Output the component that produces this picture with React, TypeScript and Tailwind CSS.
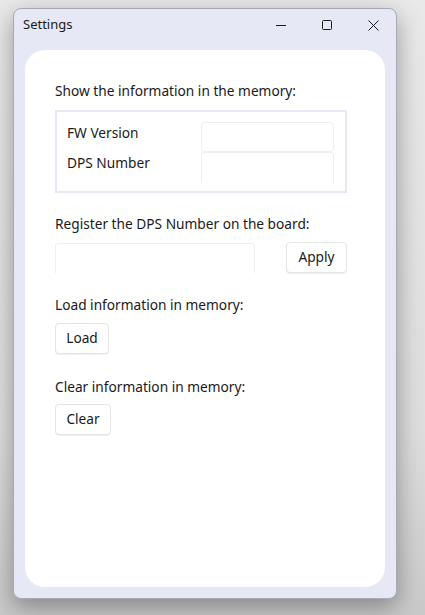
import React from "react";

export default function App() {
  return (
    <div
      className="w-[425px] h-[615px] overflow-hidden relative bg-[linear-gradient(180deg,#e9e9e9_0%,#dedede_70%,#c9c9c9_100%)] pt-[8px] pl-[13px]"
      style={{ fontFamily: '"Noto Sans", "Open Sans", sans-serif' }}
    >
      <div className="w-[384px] h-[591px] rounded-[8px] border border-[#a9a9b4] bg-[#e6e8f5] shadow-[0_8px_24px_rgba(0,0,0,0.35)] flex flex-col">
        <div className="h-[32px] flex items-center pl-[9px] text-[13px] text-[#1a1a1a]">
          <span className="flex-1">Settings</span>
          <div className="flex items-center h-full">
            <div className="w-[46px] h-full flex items-center justify-center">
              <svg width="10" height="10" viewBox="0 0 10 10"><path d="M0 5.5H10" stroke="#1a1a1a" strokeWidth="1" /></svg>
            </div>
            <div className="w-[46px] h-full flex items-center justify-center">
              <svg width="10" height="10" viewBox="0 0 10 10"><rect x="0.5" y="0.5" width="9" height="9" rx="1" fill="none" stroke="#1a1a1a" strokeWidth="1" /></svg>
            </div>
            <div className="w-[46px] h-full flex items-center justify-center">
              <svg width="11" height="11" viewBox="0 0 11 11"><path d="M0.5 0.5L10.5 10.5M10.5 0.5L0.5 10.5" stroke="#1a1a1a" strokeWidth="1" /></svg>
            </div>
          </div>
        </div>
        <div className="flex-1 px-[11px] pt-[9px] pb-[11px]">
          <div className="h-full bg-white rounded-[20px] pl-[30px] pr-[38px] pt-[30px] text-[13.7px] text-[#1a1a1a]">
            <div className="h-[22px] leading-[22px]">Show the information in the memory:</div>
            <div className="mt-[8px] h-[83px] border-2 border-[#e6e8f5] pl-[10px] pr-[11px] pt-[10px] flex">
              <div className="flex-1 flex flex-col">
                <div className="h-[20px] leading-[20px] mt-[1px]">FW Version</div>
                <div className="h-[20px] leading-[20px] mt-[10px]">DPS Number</div>
              </div>
              <div className="w-[133px] flex flex-col">
                <div className="h-[30px] border border-[#efefef] rounded-[4px]" />
                <div className="h-[31px] border border-b-0 border-[#efefef] rounded-t-[4px]" />
              </div>
            </div>
            <div className="mt-[20px] h-[22px] leading-[22px]">Register the DPS Number on the board:</div>
            <div className="mt-[7px] flex items-start">
              <div className="w-[200px] h-[30px] mt-[1px] border border-b-0 border-[#efefef] rounded-t-[4px]" />
              <div className="flex-1" />
              <button className="w-[61px] h-[31px] border border-[#e5e5e5] rounded-[4px] bg-white shadow-[0_1px_0_rgba(0,0,0,0.06)]">Apply</button>
            </div>
            <div className="mt-[21px] h-[22px] leading-[22px]">Load information in memory:</div>
            <button className="mt-[7px] w-[54px] h-[31px] border border-[#e5e5e5] rounded-[4px] bg-white shadow-[0_1px_0_rgba(0,0,0,0.06)]">Load</button>
            <div className="mt-[22px] h-[22px] leading-[22px]">Clear information in memory:</div>
            <button className="mt-[6px] w-[56px] h-[31px] border border-[#e5e5e5] rounded-[4px] bg-white shadow-[0_1px_0_rgba(0,0,0,0.06)]">Clear</button>
          </div>
        </div>
      </div>
    </div>
  );
}
